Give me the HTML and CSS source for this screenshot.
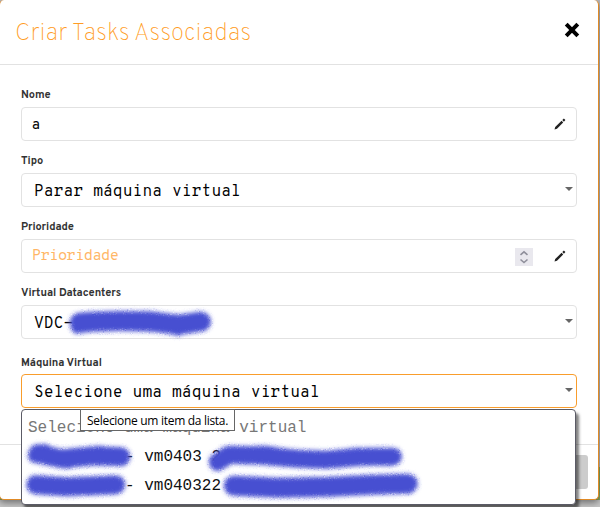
FILE: index.html
```html
<!DOCTYPE html>
<html lang="pt-BR">
<head>
<meta charset="utf-8">
<title>Criar Tasks Associadas</title>
<link rel="stylesheet" href="styles.css">
</head>
<body>
<main class="modal">
  <header class="modal-header">
    <h1 class="title">Criar Tasks Associadas</h1>
    <svg class="close" viewBox="0 0 16 16"><path d="M2.2 2.2 13.8 13.8M13.8 2.2 2.2 13.8"/></svg>
  </header>
  <section class="modal-body">
    <div class="field">
      <label class="label">Nome</label>
      <div class="control"><span class="value-text">a</span><svg class="pencil" viewBox="0 0 12 12"><path d="M.5 11.5 1.2 9 7.6 2.8 9.2 4.4 3 10.8ZM8.3 2.1 9.9.6 11.4 2.1 9.9 3.7Z"/></svg></div>
    </div>
    <div class="field">
      <label class="label">Tipo</label>
      <div class="control"><span class="value">Parar máquina virtual</span><i class="caret"></i></div>
    </div>
    <div class="field">
      <label class="label">Prioridade</label>
      <div class="control"><span class="placeholder">Prioridade</span><span class="spinner"><svg viewBox="0 0 18 18"><path d="M5.5 6.8 9 3.8l3.5 3M5.5 11.5l3.5 3 3.5-3"/></svg></span><svg class="pencil" viewBox="0 0 12 12"><path d="M.5 11.5 1.2 9 7.6 2.8 9.2 4.4 3 10.8ZM8.3 2.1 9.9.6 11.4 2.1 9.9 3.7Z"/></svg></div>
    </div>
    <div class="field field-wide">
      <label class="label">Virtual Datacenters</label>
      <div class="control"><span class="value">VDC-</span><i class="caret"></i></div>
    </div>
    <div class="field field-last">
      <label class="label">Máquina Virtual</label>
      <div class="control active"><span class="value">Selecione uma máquina virtual</span><i class="caret"></i></div>
    </div>
  </section>
  <footer class="modal-footer"><span class="button"></span></footer>
</main>
<div class="options">
  <div class="option muted">Selecione uma máquina virtual</div>
  <div class="option"><span class="masked"></span>- vm0403 2</div>
  <div class="option"><span class="masked"></span>- vm040322</div>
</div>
<div class="tooltip">Selecione um item da lista.</div>
<svg class="scribbles" viewBox="0 0 600 507">
  <defs><filter id="spray" x="-10%" y="-50%" width="120%" height="200%">
    <feGaussianBlur stdDeviation="1.9" result="soft"/>
    <feTurbulence type="fractalNoise" baseFrequency=".8" numOctaves="1" result="noise"/>
    <feDisplacementMap in="soft" in2="noise" scale="3" xChannelSelector="R" yChannelSelector="G"/>
  </filter></defs>
  <g filter="url(#spray)" transform="translate(.8 .7)">
    <path stroke-width="20" d="M79 322Q110 319 150 321L179 324 200 321"/>
    <path stroke-width="14" d="M77 326Q120 316 154 318L176 328 203 321"/>
    <path stroke-width="19" d="M37 453 61 458 94 455 120 456"/>
    <path stroke-width="14" d="M34 455 43 450 66 461 97 452 122 456"/>
    <path stroke-width="19" d="M35 484 66 486 115 484"/>
    <path stroke-width="18" d="M217 461 229 454 261 455 298 458 325 459 361 456 392 456"/>
    <path stroke-width="14" d="M216 463 225 453 265 452 314 460 356 454 394 456"/>
    <path stroke-width="20" d="M233 485 277 487 327 486 370 484 407 483"/>
  </g>
</svg>
</body>
</html>
```

FILE: styles.css
```css
* { box-sizing: border-box; }
html { height: 100%; overflow: hidden; }
body {
  margin: 0;
  width: 600px;
  height: 507px;
  overflow: hidden;
  background: linear-gradient(to bottom, #b5b5b9 0 467px, #86a660 467px 500px, #c4c4c4 500px 507px);
  font-family: "Overpass", Roboto, sans-serif;
}
.modal {
  width: 600px;
  height: 500px;
  margin-left: -1px;
  background: #fff;
  border: 1px solid #e08a26;
  border-top: 0;
  border-radius: 5px;
  box-shadow: 0 3px 6px rgba(0, 0, 0, .4);
}
.modal-header {
  height: 65px;
  border-bottom: 1px solid #e2e2e2;
  display: flex;
  justify-content: space-between;
  padding: 18px 18px 0 15px;
}
.title {
  margin: 0;
  font-family: "Overpass", Roboto, sans-serif;
  font-size: 24px;
  line-height: 32px;
  font-weight: 100;
  letter-spacing: .1px;
  color: #ff9c24;
  white-space: nowrap;
}
.close { width: 16px; height: 16px; margin-top: 4px; fill: none; stroke: #000; stroke-width: 4; }
.modal-body { height: 379px; padding: 20px 21px 0; }
.field { height: 66px; }
.field-wide { height: 69px; }
.label {
  display: block;
  height: 22px;
  line-height: 21px;
  font-size: 11px;
  font-weight: 700;
  color: #333;
  letter-spacing: -.05px;
}
.field-last .label { line-height: 23px; }
.control {
  height: 34px;
  border: 1px solid #e2e2e2;
  border-radius: 4px;
  display: flex;
  align-items: center;
  justify-content: space-between;
  padding: 0 10px 0 12px;
  color: #000;
  background: #fff;
}
.active { border-color: #f99d2c; }
.value, .placeholder {
  font-family: "Overpass Mono", "DejaVu Sans Mono", monospace;
  font-size: 16px;
  white-space: pre;
}
.value { padding-top: 3px; }
.value-text { font-size: 15px; margin-left: -2px; padding-top: 3px; }
.placeholder { font-size: 15px; letter-spacing: -.6px; color: #ffb666; margin-left: -2px; flex: 1; }
.pencil { width: 12px; height: 12px; fill: #222; }
.caret {
  border: 4px solid transparent;
  border-top-color: #666;
  border-bottom: 0;
  margin-right: -7px;
  margin-top: -2px;
}
.spinner { width: 18px; height: 18px; margin: 2px 21px 0 0; background: #e9e8ee; }
.spinner svg { display: block; fill: none; stroke: #8f8f9b; stroke-width: 1.6; }
.modal-footer {
  height: 55px;
  border-top: 1px solid #e2e2e2;
  padding: 10px;
  display: flex;
  justify-content: flex-end;
}
.button { width: 80px; height: 34px; border-radius: 3px; background: #ccc; }
.options {
  position: absolute;
  left: 21px;
  top: 409px;
  width: 555px;
  height: 96px;
  background: #fff;
  border: 1px solid #5b5b66;
  border-radius: 4px;
  padding: 4px 6px;
  box-shadow: 3px 4px 3px rgba(0, 0, 0, .5);
}
.option {
  height: 29px;
  line-height: 29px;
  font-family: "Liberation Mono", monospace;
  font-size: 16px;
  color: #111;
  white-space: pre;
}
.muted { color: #777; }
.masked { display: inline-block; width: 97px; }
.tooltip {
  position: absolute;
  left: 80px;
  top: 409px;
  width: 155px;
  height: 22px;
  border: 1px solid #666;
  background: #fff;
  color: #000;
  font: 12px/22px "Open Sans", sans-serif;
  letter-spacing: -.3px;
  padding-left: 6px;
  white-space: nowrap;
}
.scribbles { position: absolute; left: 0; top: 0; width: 600px; height: 507px; pointer-events: none; fill: none; stroke: #464fd1; stroke-linecap: round; stroke-linejoin: round; }
```
